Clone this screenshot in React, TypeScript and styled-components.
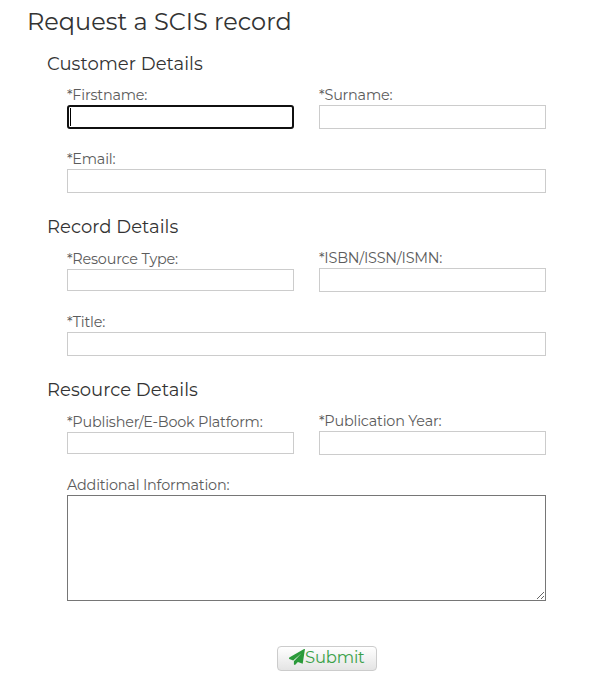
import React from "react";
import styled, { createGlobalStyle } from "styled-components";

const GlobalStyle = createGlobalStyle`
  * { box-sizing: border-box; }
  body {
    margin: 0;
    background: #fff;
    font-family: Montserrat, Inter, "Open Sans", sans-serif;
    font-weight: 400;
    overflow: hidden;
  }
`;

const Form = styled.form`
  width: 602px;
  height: 687px;
  padding: 4px 56px 0 27px;
`;

const Title = styled.h1`
  margin: 0 0 12px;
  height: 36px;
  font-size: 24px;
  font-weight: 400;
  line-height: 36px;
  color: #333;
`;

const Section = styled.section`
  margin: 0 0 22px 20px;
`;

const Heading = styled.h2`
  margin: 0 0 10px;
  height: 24px;
  font-size: 18px;
  font-weight: 400;
  line-height: 24px;
  letter-spacing: 0.03px;
  color: #333;
`;

const Rows = styled.div`
  display: flex;
  flex-direction: column;
  gap: 21px;
  margin-left: 20px;
`;

const Row = styled.div`
  display: flex;
  align-items: center;
  gap: 25px;
`;

const FieldBox = styled.div`
  flex: 1;
  min-width: 0;
  position: relative;
`;

const Label = styled.label`
  display: block;
  height: 19px;
  font-size: 14.4px;
  line-height: 18px;
  letter-spacing: -0.2px;
  white-space: nowrap;
  color: #5c5c5c;
`;

const Input = styled.input<{ $short?: boolean; $active?: boolean }>`
  display: block;
  width: 100%;
  height: ${(p) => (p.$short ? 22 : 24)}px;
  margin: 0;
  padding: 1px 2px;
  border: ${(p) => (p.$active ? "2px solid #101010" : "1px solid #ccc")};
  border-radius: ${(p) => (p.$active ? 3 : 0)}px;
  background: #fff;
  outline: none;
`;

const Caret = styled.span`
  position: absolute;
  left: 3px;
  bottom: 3px;
  width: 1px;
  height: 18px;
  background: #000;
`;

const TextArea = styled.textarea`
  display: block;
  width: 100%;
  height: 106px;
  margin: 0;
  border: 1px solid #767676;
  border-radius: 0;
  background: #fff;
  outline: none;
  resize: vertical;
`;

const Actions = styled.div`
  display: flex;
  margin: 45px 0 0 250px;
`;

const SubmitButton = styled.button`
  display: flex;
  align-items: flex-start;
  width: 100px;
  height: 25px;
  padding: 0 0 0 11px;
  border: 1px solid #ccc;
  border-radius: 4px;
  background: linear-gradient(#fff, #e4e4e4);
  color: #3aa148;
  font: inherit;
  font-size: 16.4px;
  line-height: 20px;
  letter-spacing: -0.15px;
`;

const PlaneIcon = styled.svg`
  flex: none;
  width: 16px;
  height: 16px;
  margin-top: 2px;
  fill: #2b9a3a;
`;

type FieldProps = {
  label: string;
  short?: boolean;
  active?: boolean;
};

const Field = ({ label, short, active }: FieldProps) => (
  <FieldBox>
    <Label>{label}</Label>
    <Input aria-label={label} $short={short} $active={active} />
    {active && <Caret />}
  </FieldBox>
);

export default function App() {
  return (
    <>
      <GlobalStyle />
      <Form onSubmit={(e) => e.preventDefault()}>
        <Title>Request a SCIS record</Title>
        <Section>
          <Heading>Customer Details</Heading>
          <Rows>
            <Row>
              <Field label="*Firstname:" active />
              <Field label="*Surname:" />
            </Row>
            <Row>
              <Field label="*Email:" />
            </Row>
          </Rows>
        </Section>
        <Section>
          <Heading>Record Details</Heading>
          <Rows>
            <Row>
              <Field label="*Resource Type:" short />
              <Field label="*ISBN/ISSN/ISMN:" />
            </Row>
            <Row>
              <Field label="*Title:" />
            </Row>
          </Rows>
        </Section>
        <Section>
          <Heading>Resource Details</Heading>
          <Rows>
            <Row>
              <Field label="*Publisher/E-Book Platform:" short />
              <Field label="*Publication Year:" />
            </Row>
            <FieldBox>
              <Label>Additional Information:</Label>
              <TextArea aria-label="Additional Information" />
            </FieldBox>
          </Rows>
        </Section>
        <Actions>
          <SubmitButton type="submit">
            <PlaneIcon viewBox="0 0 16 16">
              <path d="M15.900 0.400 13.700 14.700 8.900 12.900 6 16 4.900 15.600V12.300L12.500 4.200 4.200 11.600.3 9.900C-.2 9.600-.2 8.900.3 8.600L15.100.1C15.500-.1 16 .1 15.900.4z" />
            </PlaneIcon>
            Submit
          </SubmitButton>
        </Actions>
      </Form>
    </>
  );
}
